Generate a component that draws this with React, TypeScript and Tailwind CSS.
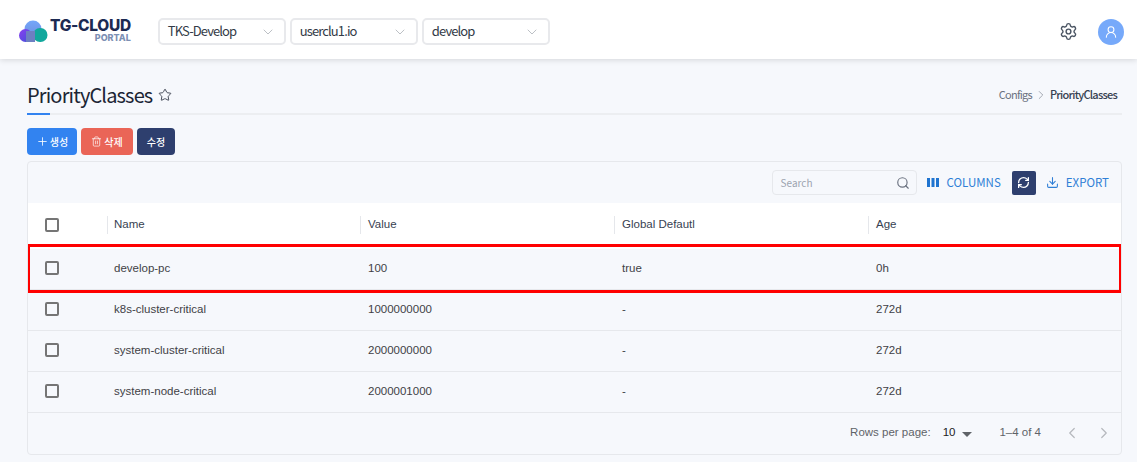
import { ChevronDown, ChevronLeft, ChevronRight, Download, Plus, RefreshCw, Search, Settings, Star, Trash2, UserRound } from "lucide-react";

const rows = [
  { name: "develop-pc", value: "100", global: "true", age: "0h" },
  { name: "k8s-cluster-critical", value: "1000000000", global: "-", age: "272d" },
  { name: "system-cluster-critical", value: "2000000000", global: "-", age: "272d" },
  { name: "system-node-critical", value: "2000001000", global: "-", age: "272d" },
];

const colClass = "grid grid-cols-[79px_254px_254px_254px_1fr] items-center";

const Logo = () => (
  <div className="flex items-center h-[30px] ml-[19px] -mt-[3px]">
    <svg width="29" height="23" viewBox="0 0 29 23" className="shrink-0 mt-[3px]">
      <defs>
        <linearGradient id="logoLeft" x1="0" y1="0" x2="1" y2="1">
          <stop offset="0" stopColor="#8b3ff0" />
          <stop offset="1" stopColor="#3f51d8" />
        </linearGradient>
        <linearGradient id="logoTop" x1="0" y1="0" x2="0" y2="1">
          <stop offset="0" stopColor="#74a6fb" />
          <stop offset="1" stopColor="#6f8fdc" />
        </linearGradient>
      </defs>
      <circle cx="14" cy="9" r="8.5" fill="url(#logoTop)" />
      <circle cx="6.5" cy="15.5" r="6.5" fill="url(#logoLeft)" />
      <rect x="14" y="8" width="14.5" height="14" rx="7" fill="#12a89d" />
      <rect x="7" y="11" width="9" height="11" fill="#6d7fc2" />
    </svg>
    <div className="flex flex-col items-end ml-[2px] font-['Inter',sans-serif] font-extrabold">
      <span className="text-[15.5px] tracking-[-0.3px] leading-[14px] text-[#1c2a52]">TG-CLOUD</span>
      <span className="text-[9px] leading-[9px] text-[#7c90b4]">PORTAL</span>
    </div>
  </div>
);

const HeaderSelect = ({ label, width }: { label: string; width: string }) => (
  <div className={`${width} h-[27px] flex items-center justify-between pl-[8px] pr-[8px] bg-white border-2 border-[#e8e9ec] rounded-[5px]`}>
    <span className="text-[13px] tracking-[-0.9px] leading-[18px] pb-[1px] text-[#333b47]">{label}</span>
    <ChevronDown size={16} strokeWidth={1} className="text-[#9aa0a8]" />
  </div>
);

const Checkbox = () => <div className="ml-[17px] w-[14px] h-[14px] rounded-[2px] border-2 border-[#757575] bg-transparent" />;

export default function App() {
  return (
    <div className="relative w-[1137px] h-[462px] overflow-hidden bg-[#f6f8fc] font-['Noto_Sans_CJK_KR','Noto_Sans',sans-serif]">
      <header className="relative z-10 h-[59px] bg-white shadow-[0_1px_6px_rgba(0,0,0,0.14)] flex items-center pt-[4px]">
        <Logo />
        <div className="flex gap-[4px] ml-[27px]">
          <HeaderSelect label="TKS-Develop" width="w-[128px]" />
          <HeaderSelect label="userclu1.io" width="w-[128px]" />
          <HeaderSelect label="develop" width="w-[128px]" />
        </div>
        <div className="ml-auto flex items-center gap-[20px] pr-[13px]">
          <Settings size={19} strokeWidth={1.8} className="text-[#4b5563]" />
          <div className="w-[26px] h-[26px] rounded-full bg-[#76a9fa] flex items-center justify-center">
            <UserRound size={14} strokeWidth={1.8} className="text-white" />
          </div>
        </div>
      </header>

      <main className="pl-[27px] pr-[15px]">
        <div className="relative h-[56px] flex items-center justify-between border-b-2 border-[#eceef1] pt-[17px]">
          <div className="flex items-center gap-[6px]">
            <h1 className="text-[20px] tracking-[-0.85px] text-[#1b2534] leading-[28px]">PriorityClasses</h1>
            <Star size={14} strokeWidth={1.6} className="text-[#3b4250]" />
          </div>
          <div className="flex items-center text-[11px] tracking-[-0.75px] mr-[5px]">
            <span className="text-[#6b7280]">Configs</span>
            <ChevronRight size={14} strokeWidth={1} className="mx-[2px] text-[#6b7280]" />
            <span className="font-medium text-[#374151]">PriorityClasses</span>
          </div>
          <div className="absolute left-0 -bottom-[2px] w-[23px] h-[2px] bg-[#3283f0]" />
        </div>

        <div className="flex gap-[4px] mt-[13px]">
          <button className="w-[50px] h-[27px] rounded-[4px] bg-[#3283f0] text-white text-[10px] font-medium flex items-center justify-center gap-[1px]">
            <Plus size={13} strokeWidth={1.5} />
            생성
          </button>
          <button className="w-[52px] h-[27px] rounded-[4px] bg-[#ea6557] text-white text-[10px] font-medium flex items-center justify-center gap-[2px]">
            <Trash2 size={11} strokeWidth={1.5} />
            삭제
          </button>
          <button className="w-[38px] h-[27px] rounded-[4px] bg-[#2e3f6e] text-white text-[10px] font-medium">수정</button>
        </div>

        <div className="relative mt-[6px] h-[294px] border border-[#e6e8ec] rounded-[4px] overflow-hidden">
          <div className="h-[41px] flex items-center justify-end pr-[12px]">
            <div className="w-[145px] h-[25px] mr-[10px] flex items-center justify-between pl-[8px] pr-[6px] border border-[#e6e8ec] rounded-[4px]">
              <span className="text-[10px] text-[#9ca3af]">Search</span>
              <Search size={14} strokeWidth={2} className="text-[#6b7280]" />
            </div>
            <div className="flex items-center text-[#2f7fd6] text-[11.5px]">
              <svg width="12" height="9" viewBox="0 0 12 9" className="mr-[8px]">
                <path d="M0 0h3v9H0zM4.5 0h3v9h-3zM9 0h3v9H9z" fill="#1f74d0" />
              </svg>
              <span>COLUMNS</span>
            </div>
            <div className="ml-[11px] w-[24px] h-[24px] rounded-[2px] bg-[#2e3f6e] flex items-center justify-center">
              <RefreshCw size={13} strokeWidth={2.4} className="text-white" />
            </div>
            <div className="ml-[10px] flex items-center text-[#2f7fd6] text-[11.5px]">
              <Download size={13} strokeWidth={2} className="mr-[7px]" />
              <span>EXPORT</span>
            </div>
          </div>

          <div className="font-['Liberation_Sans',sans-serif] text-[11.5px]">
            <div className={`${colClass} h-[46px] pb-[2px] bg-white text-[#374151]`}>
              <Checkbox />
              {["Name", "Value", "Global Defautl", "Age"].map((title, i) => (
                <div key={title} className={`border-l border-[#e5e7eb] h-[18px] flex items-center ${i === 0 ? "pl-[6px]" : "-ml-[1px] pl-[7px]"}`}>
                  {title}
                </div>
              ))}
            </div>
            {rows.map((row) => (
              <div key={row.name} className={`${colClass} h-[41px] border-b border-[#e6e8ec] text-[#3f3f46]`}>
                <div className="-mt-[2px]">
                  <Checkbox />
                </div>
                <div className="pl-[7px]">{row.name}</div>
                <div className="pl-[7px]">{row.value}</div>
                <div className="pl-[7px]">{row.global}</div>
                <div className="pl-[7px]">{row.age}</div>
              </div>
            ))}
            <div className="h-[40px] flex items-center justify-end text-[#5f6368]">
              <span>Rows per page:</span>
              <span className="ml-[12px] text-[#222]">10</span>
              <svg width="10" height="5" viewBox="0 0 10 5" className="ml-[7px] mt-[2px]">
                <path d="M0 0h10L5 5z" fill="#5f6368" />
              </svg>
              <span className="ml-[27px]">1–4 of 4</span>
              <ChevronLeft size={18} strokeWidth={1.6} className="ml-[22px] text-[#b5b8bd]" />
              <ChevronRight size={18} strokeWidth={1.6} className="ml-[14px] mr-[8px] text-[#b5b8bd]" />
            </div>
          </div>

          <div className="absolute left-[-1px] right-[-1px] top-[82px] h-[49px] border-[3px] border-[#ff0000] pointer-events-none" />
        </div>
      </main>
    </div>
  );
}
